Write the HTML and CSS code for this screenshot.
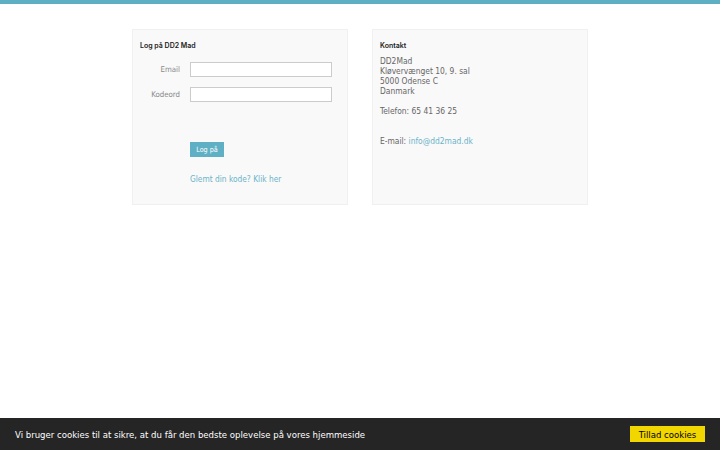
FILE: index.html
```html
<!DOCTYPE html>
<html lang="da">
<head>
    <meta charset="UTF-8">
    <title>Log på DD2 Mad</title>
    <link rel="stylesheet" href="styles.css">
</head>
<body>
    <div class="top-bar"></div>

    <div class="content">
        <div class="panel">
            <h3 class="panel-title">Log på DD2 Mad</h3>
            <form class="login-form">
                <div class="form-row">
                    <label for="email">Email</label>
                    <input type="text" id="email">
                </div>
                <div class="form-row">
                    <label for="password">Kodeord</label>
                    <input type="password" id="password">
                </div>
                <div class="form-row submit-row">
                    <span></span>
                    <button type="button" class="btn-login">Log på</button>
                </div>
                <div class="form-row">
                    <span></span>
                    <a href="#" class="forgot">Glemt din kode? Klik her</a>
                </div>
            </form>
        </div>

        <div class="panel">
            <h3 class="panel-title">Kontakt</h3>
            <p class="contact">
                DD2Mad<br>
                Kløvervænget 10, 9. sal<br>
                5000 Odense C<br>
                Danmark<br>
                <br>
                Telefon: 65 41 36 25<br>
                <br>
                <br>
                E-mail: <a href="#">info@dd2mad.dk</a>
            </p>
        </div>
    </div>

    <div class="cookie-bar">
        <span>Vi bruger cookies til at sikre, at du får den bedste oplevelse på vores hjemmeside</span>
        <button type="button" class="cookie-btn">Tillad cookies</button>
    </div>
</body>
</html>
```

FILE: styles.css
```css
body {
    margin: 0;
    font-family: 'DejaVu Sans Condensed', 'DejaVu Sans', sans-serif;
    font-stretch: condensed;
    background-color: #fff;
    color: #666;
}

.top-bar {
    height: 4px;
    background-color: #5eafc3;
}

.content {
    display: flex;
    gap: 24px;
    width: 456px;
    margin: 25px auto 0;
}

.panel {
    flex: 1;
    background-color: #f9f9f9;
    border: 1px solid #f0f0f0;
    padding: 11px 7px 10px;
}

.panel-title {
    margin: 0 0 5px;
    font-family: 'Inter', sans-serif;
    font-stretch: normal;
    font-size: 7px;
    font-weight: 600;
    line-height: 10px;
    color: #222;
}

.login-form {
    padding-top: 6px;
}

.form-row {
    display: grid;
    grid-template-columns: 40px 142px;
    column-gap: 10px;
    align-items: center;
    margin-bottom: 10px;
}

.form-row label {
    text-align: right;
    font-size: 7.8px;
    color: #888;
}

.form-row input {
    height: 15px;
    box-sizing: border-box;
    border: 1px solid #ccc;
    background-color: #fff;
    padding: 0 4px;
    margin: 0;
}

.submit-row {
    margin-top: 40px;
    margin-bottom: 17px;
}

.btn-login {
    justify-self: start;
    width: 34px;
    height: 15px;
    padding: 0;
    border: none;
    background-color: #5fb0c4;
    color: #fff;
    font-family: inherit;
    font-stretch: condensed;
    font-size: 7.2px;
}

.forgot {
    font-size: 8.3px;
    color: #6ab4c8;
    text-decoration: none;
}

.contact {
    margin: 0;
    font-size: 8.4px;
    line-height: 10px;
}

.contact a {
    color: #6ab4c8;
    text-decoration: none;
}

.cookie-bar {
    position: fixed;
    left: 0;
    right: 0;
    bottom: 0;
    height: 32px;
    display: flex;
    align-items: center;
    justify-content: space-between;
    padding: 0 15px;
    background-color: #252525;
    color: #fff;
    font-size: 9.5px;
}

.cookie-btn {
    width: 75px;
    height: 16px;
    padding: 0;
    border: none;
    background-color: #f1d600;
    color: #000;
    font-family: inherit;
    font-stretch: condensed;
    font-size: 9.5px;
}
```
